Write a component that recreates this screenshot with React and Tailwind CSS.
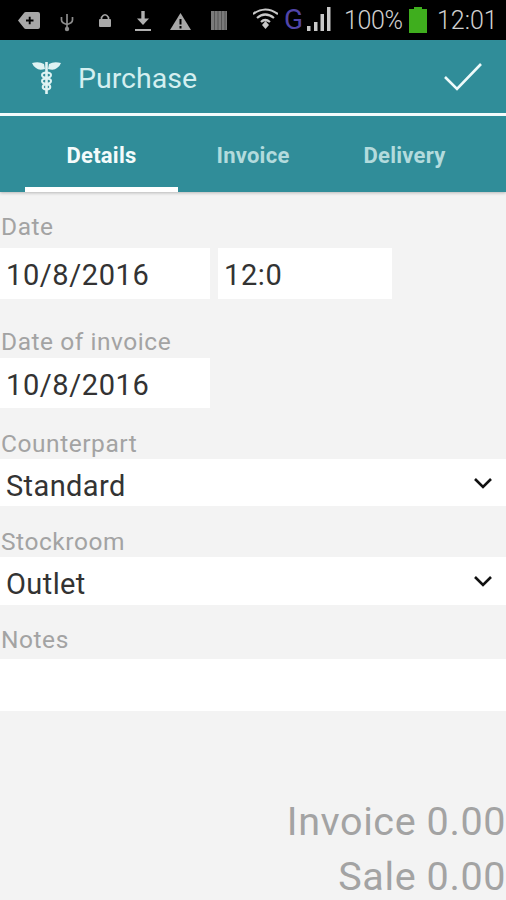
const font = { fontFamily: "Roboto, sans-serif" };

function StatusIcons() {
  return (
    <div className="flex h-[40px] items-center bg-black text-[#c4c4c4]">
      <svg width="253" height="40" viewBox="0 0 253 40" className="shrink-0">
        <path d="M18 20.5 L24 13 Q24.5 12 26 12 H38 Q40 12 40 14 V27 Q40 29 38 29 H26 Q24.5 29 24 28 Z" fill="#a8a8a8" />
        <path d="M26 20.5 H33.5 M29.7 16.8 V24.2" stroke="#000" strokeWidth="1.9" />
        <path d="M67 14 V29 M61.5 17 V20 Q61.5 23 67 24.5 Q72.5 23 72.5 20 V17" stroke="#8c8c8c" strokeWidth="1.7" fill="none" />
        <circle cx="67" cy="29" r="2.2" fill="#8c8c8c" />
        <rect x="99" y="19" width="12" height="8" rx="1" fill="#a8a8a8" />
        <path d="M101.5 19 V17.5 Q105 12 108.5 17.5 V19" stroke="#a8a8a8" strokeWidth="1.7" fill="none" />
        <path d="M143 11 V20" stroke="#b0b0b0" strokeWidth="3.4" />
        <path d="M137 18.5 H149 L143 25 Z" fill="#b0b0b0" />
        <path d="M135 30 H151" stroke="#b0b0b0" strokeWidth="2" />
        <path d="M170 30 L180.5 13 L191 30 Z" fill="#a8a8a8" />
        <path d="M180.5 19 V24.5 M180.5 26 V28.5" stroke="#000" strokeWidth="2" />
        <rect x="211" y="11" width="16" height="19" fill="#7a7a7a" />
        <path d="M214.5 11 V30 M218 11 V30 M221.5 11 V30 M225 11 V30" stroke="#555" strokeWidth="1" />
      </svg>
      <svg width="25" height="40" viewBox="0 0 25 40" className="shrink-0">
        <path d="M0 14 Q12 5 25 14 M4 18 Q12 11 21 18 M8 22 Q12 18 17 22" stroke="#c8c8c8" strokeWidth="2.2" fill="none" />
        <path d="M9 25 L12.5 21 L16 25 L12.5 29 Z" fill="#c8c8c8" />
      </svg>
      <span className="ml-[6px] w-[19px] text-[28px] leading-none text-[#5145a8]">G</span>
      <svg width="27" height="40" viewBox="0 0 27 40" className="ml-[2px] shrink-0">
        <rect x="2" y="26" width="3.5" height="5" fill="#c8c8c8" />
        <rect x="9" y="22" width="3.5" height="9" fill="#c8c8c8" />
        <rect x="15.5" y="14" width="3.5" height="17" fill="#c8c8c8" />
        <rect x="22" y="7" width="3.5" height="24" fill="#c8c8c8" />
      </svg>
      <span className="ml-[12px] w-[58px] text-[25px] font-light leading-none tracking-[-0.4px] text-[#d0d0d0]">100%</span>
      <svg width="18" height="26" viewBox="0 0 18 26" className="ml-[7px] shrink-0">
        <rect x="5" y="0" width="8" height="3" fill="#3fae1e" />
        <rect x="0" y="2" width="18" height="24" fill="#3fae1e" />
      </svg>
      <span className="ml-[10px] text-[25px] font-light leading-none text-[#d0d0d0]">12:01</span>
    </div>
  );
}

function Header() {
  return (
    <div className="flex h-[73px] items-center justify-between pl-[31px] pr-[24px]">
      <div className="flex items-center gap-[16px]">
        <svg width="31" height="34" viewBox="0 0 31 34" className="mt-[2px] shrink-0">
          <path d="M1 2 Q8 0 13 3 L14 8 Q8 10 5 7 Q2 5 1 2 Z M30 2 Q23 0 18 3 L17 8 Q23 10 26 7 Q29 5 30 2 Z" fill="#dff3f3" />
          <rect x="14.2" y="1" width="2.6" height="32" fill="#dff3f3" />
          <ellipse cx="15.5" cy="14" rx="4.5" ry="2.6" fill="none" stroke="#dff3f3" strokeWidth="2" />
          <ellipse cx="15.5" cy="20" rx="4.5" ry="2.6" fill="none" stroke="#dff3f3" strokeWidth="2" />
          <ellipse cx="15.5" cy="26" rx="3.8" ry="2.4" fill="none" stroke="#dff3f3" strokeWidth="2" />
        </svg>
        <span className="mt-[6px] text-[28.5px] leading-none text-[#d4eff0]">Purchase</span>
      </div>
      <svg width="38" height="28" viewBox="0 0 38 28" className="shrink-0">
        <path d="M1 14 L13 26 L37 1" stroke="#eefafa" strokeWidth="2.6" fill="none" />
      </svg>
    </div>
  );
}

function Tabs() {
  return (
    <div className="flex h-[76px] pl-[25px] pr-[25px] text-[22px] font-bold tracking-[0.25px]">
      <div className="flex w-[153px] items-center justify-center border-b-[5px] border-white pt-[8px] text-[#f4fbfb]">Details</div>
      <div className="flex w-[150px] items-center justify-center pt-[3px] text-[#b3dbdd]">Invoice</div>
      <div className="flex w-[153px] items-center justify-center pt-[3px] text-[#b3dbdd]">Delivery</div>
    </div>
  );
}

function Label({ children, className = "" }) {
  return <div className={"pl-[1px] text-[24.5px] leading-[24px] tracking-[0.55px] text-[#a3a3a3] " + className}>{children}</div>;
}

function Chevron() {
  return (
    <svg width="20" height="12" viewBox="0 0 20 12" className="shrink-0">
      <path d="M2 2 L10 10 L18 2" stroke="#111" strokeWidth="2.6" fill="none" />
    </svg>
  );
}

function Select({ value, className }) {
  return (
    <div className={"flex items-center justify-between bg-white pl-[6px] pr-[13px] " + className}>
      <span className="pt-[6px] text-[29px] leading-[34px] tracking-[0.4px] text-[#333]">{value}</span>
      <Chevron />
    </div>
  );
}

function Field({ value, className }) {
  return (
    <div className={"flex items-center bg-white pl-[6px] pt-[5px] text-[29px] tracking-[0.6px] text-[#333] " + className}>
      {value}
    </div>
  );
}

export default function App() {
  return (
    <div style={font} className="relative h-[900px] w-[506px] overflow-hidden bg-[#f3f3f3]">
      <StatusIcons />
      <div className="bg-[#308d99] shadow-[0_1px_3px_rgba(0,0,0,0.25)]">
        <Header />
        <div className="h-[3px] bg-[#f4fbfb]" />
        <Tabs />
      </div>

      <Label className="mt-[23px]">Date</Label>
      <div className="mt-[9px] flex gap-[8px]">
        <Field value="10/8/2016" className="h-[51px] w-[210px]" />
        <Field value="12:0" className="h-[51px] w-[174px]" />
      </div>

      <Label className="mt-[31px]">Date of invoice</Label>
      <Field value="10/8/2016" className="mt-[4px] h-[50px] w-[210px]" />

      <Label className="mt-[24px]">Counterpart</Label>
      <Select value="Standard" className="mt-[3px] h-[47px]" />

      <Label className="mt-[24px]">Stockroom</Label>
      <Select value="Outlet" className="mt-[3px] h-[48px]" />

      <Label className="mt-[23px]">Notes</Label>
      <div className="mt-[7px] h-[52px] bg-white" />

      <div className="mt-[83px] text-right text-[39.5px] leading-[55px] tracking-[0.6px] text-[#a3a3a3]">
        <div>Invoice 0.00</div>
        <div>Sale 0.00</div>
      </div>
    </div>
  );
}
